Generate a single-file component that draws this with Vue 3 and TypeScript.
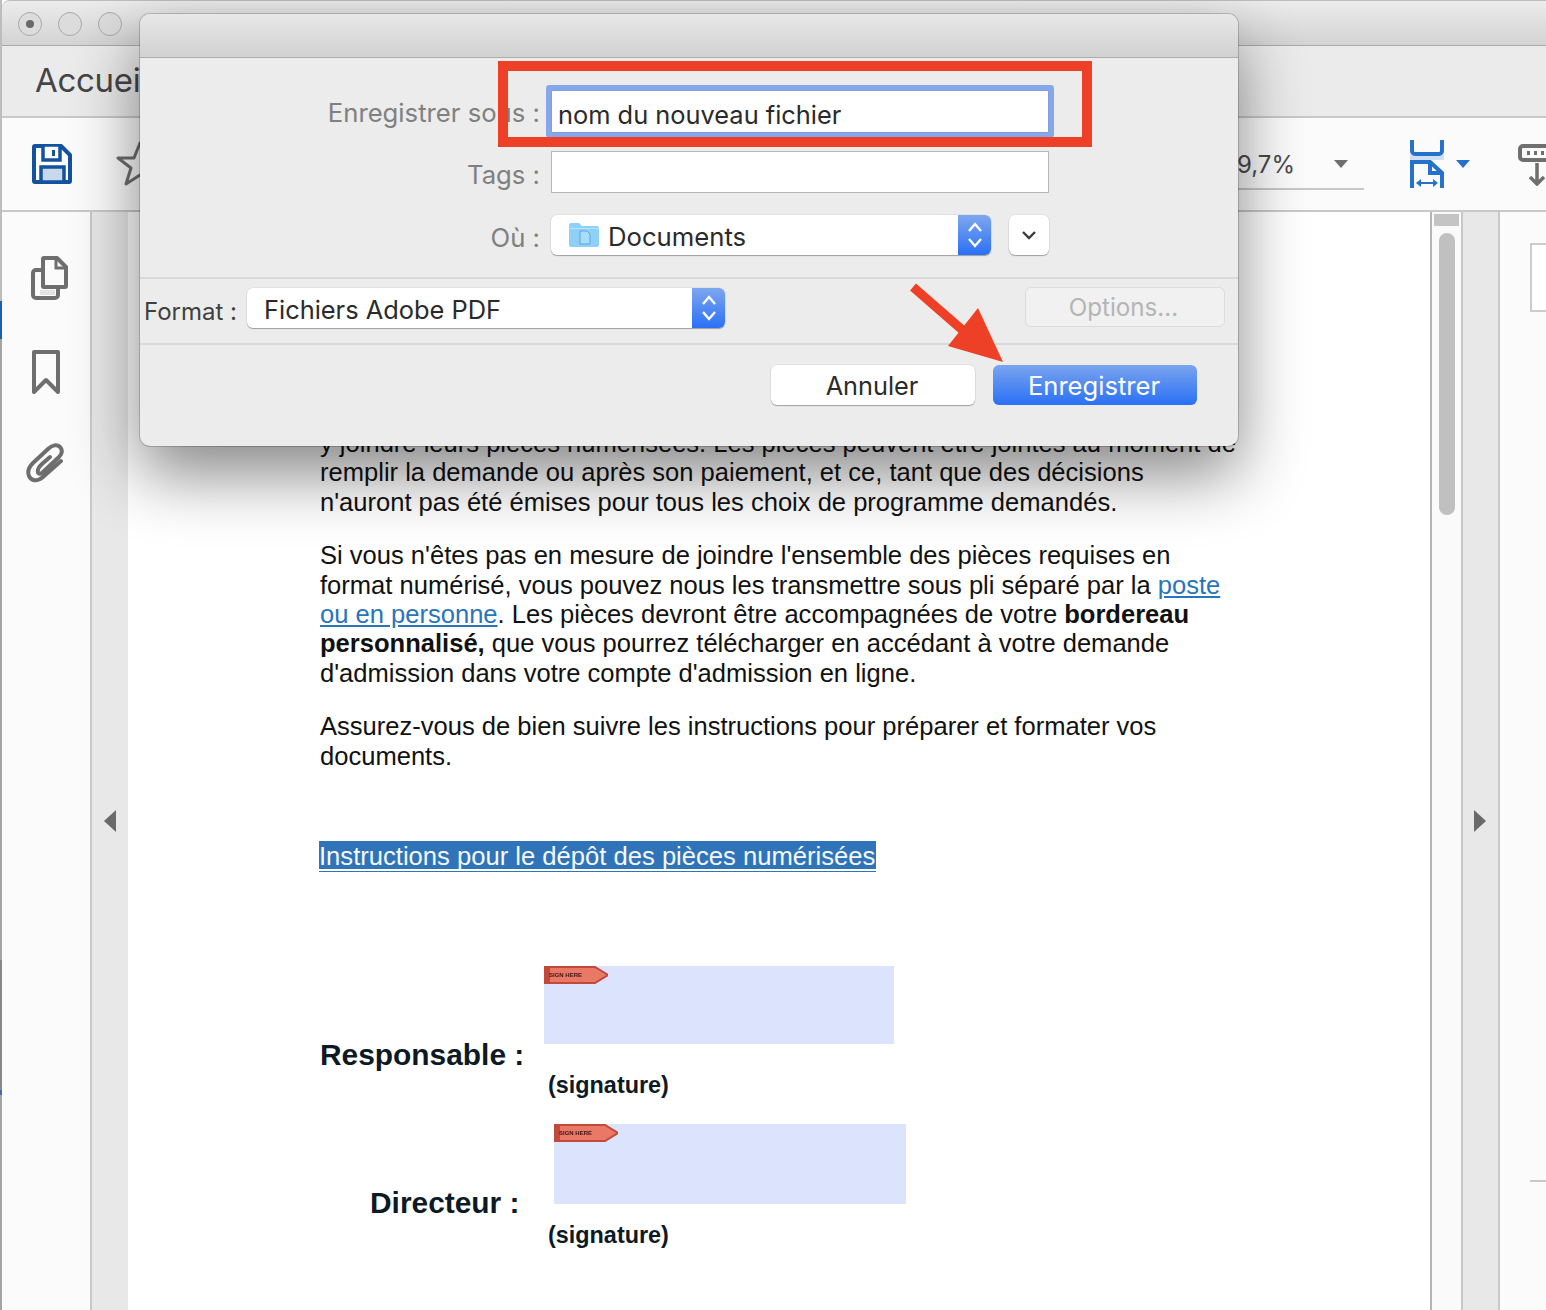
<script setup lang="ts">
const firstPara: string[] = [
  "y joindre leurs pièces numérisées. Les pièces peuvent être jointes au moment de",
  "remplir la demande ou après son paiement, et ce, tant que des décisions",
  "n'auront pas été émises pour tous les choix de programme demandés.",
];
</script>

<template>
  <div class="app">
    <div class="edge"></div>
    <header class="titlebar">
      <span class="light"><i></i></span>
      <span class="light"></span>
      <span class="light"></span>
    </header>
    <div class="tabbar"><span class="tab">Accueil</span></div>
    <div class="toolbar">
      <svg class="save" width="40" height="40" viewBox="0 0 40 40">
        <path d="M3 2H29L38 11V37a1 1 0 0 1-1 1H3a1 1 0 0 1-1-1V3a1 1 0 0 1 1-1Z" fill="#fff" stroke="#12529f" stroke-width="4" stroke-linejoin="round" />
        <rect x="11" y="1" width="17" height="15" fill="#fff" stroke="#12529f" stroke-width="3.5" />
        <rect x="20" y="6" width="3" height="6" fill="#12529f" />
        <rect x="9" y="23" width="23" height="15" fill="#c9d9ec" stroke="#12529f" stroke-width="3.5" />
      </svg>
      <svg class="star" width="48" height="48" viewBox="0 0 48 48">
        <path d="M24 3L30 18H46L33 28L38 44L24 35L10 44L15 28L2 18H18Z" fill="none" stroke="#6f6f6f" stroke-width="3" stroke-linejoin="round" />
      </svg>
      <div class="zoomfield"><span>9,7%</span><i class="caret grey"></i></div>
      <svg class="fit" width="34" height="48" viewBox="0 0 34 48">
        <rect x="0" y="15" width="34" height="5" fill="#cfe0f5" />
        <path d="M2 0V11a3 3 0 0 0 3 3H29a3 3 0 0 0 3-3V0" fill="none" stroke="#2472cc" stroke-width="4" />
        <path d="M2 48V22H20L32 33V48M20 22V33H32" fill="none" stroke="#2472cc" stroke-width="4" />
        <path d="M9 43H25" stroke="#2472cc" stroke-width="2" />
        <path d="M6 43L11 39V47ZM28 43L23 39V47Z" fill="#2472cc" />
      </svg>
      <i class="caret blue"></i>
      <svg class="printer" width="40" height="42" viewBox="0 0 40 42">
        <rect x="2" y="2" width="38" height="14" rx="3" fill="none" stroke="#6f6f6f" stroke-width="4" />
        <path d="M9 7h3v4h-3zM16 7h3v4h-3zM23 7h3v4h-3z" fill="#6f6f6f" />
        <path d="M19 19V40M12 33L19 40L26 33" fill="none" stroke="#6f6f6f" stroke-width="3.5" />
      </svg>
    </div>

    <div class="body">
      <aside class="rail">
        <svg class="ic-copy" width="38" height="44" viewBox="0 0 38 44">
          <rect x="3" y="14" width="25" height="28" rx="3" fill="none" stroke="#6e6e6e" stroke-width="4" />
          <rect x="10" y="34" width="15" height="5" fill="#e2e2e2" />
          <path d="M14 2H27L36 11V30a1 1 0 0 1-1 1H14a1 1 0 0 1-1-1V3a1 1 0 0 1 1-1Z" fill="#fbfbfb" stroke="#6e6e6e" stroke-width="4" stroke-linejoin="round" />
          <path d="M26 2V12H36" fill="none" stroke="#6e6e6e" stroke-width="3" />
        </svg>
        <svg class="ic-mark" width="28" height="44" viewBox="0 0 28 44">
          <path d="M2 2H26V42L14 30L2 42Z" fill="none" stroke="#6e6e6e" stroke-width="4" stroke-linejoin="round" />
        </svg>
        <svg class="ic-clip" width="38" height="41" viewBox="0 0 38 41">
          <path d="M35 19L17 35C11 40 5 39 3 34C1 29 3 25 7 21L22 7C26 3 31 2 34 5C37 8 36 12 33 15L17 30C14 33 11 32 12 28C12 26 14 24 16 22L24 15" fill="none" stroke="#6e6e6e" stroke-width="4" stroke-linecap="round" />
        </svg>
      </aside>
      <div class="gutter"><i class="tri left"></i></div>
      <main class="page">
        <p class="para">
          <template v-for="line in firstPara" :key="line">{{ line }}<br /></template>
        </p>
        <p class="para">
          Si vous n'êtes pas en mesure de joindre l'ensemble des pièces requises en<br />
          format numérisé, vous pouvez nous les transmettre sous pli séparé par la <a class="lnk">poste</a><br />
          <a class="lnk">ou en personne</a>. Les pièces devront être accompagnées de votre <b>bordereau</b><br />
          <b>personnalisé,</b> que vous pourrez télécharger en accédant à votre demande<br />
          d'admission dans votre compte d'admission en ligne.
        </p>
        <p class="para">
          Assurez-vous de bien suivre les instructions pour préparer et formater vos<br />
          documents.
        </p>
        <div class="selected"><span>Instructions pour le dépôt des pièces numérisées</span></div>

        <div class="sign first">
          <strong class="who">Responsable :</strong>
          <div class="field">
            <div class="box">
              <span class="flag"><svg width="64" height="18" viewBox="0 0 64 18"><path d="M1 1H51L64 9L51 17H1Z" fill="#ea7866" stroke="#c24a3c" stroke-width="2" /><path d="M1 1H6V17H1Z" fill="#c24a3c" /></svg><em>SIGN HERE</em></span>
            </div>
            <strong class="sigtext">(signature)</strong>
          </div>
        </div>
        <div class="sign second">
          <strong class="who">Directeur :</strong>
          <div class="field">
            <div class="box">
              <span class="flag"><svg width="64" height="18" viewBox="0 0 64 18"><path d="M1 1H51L64 9L51 17H1Z" fill="#ea7866" stroke="#c24a3c" stroke-width="2" /><path d="M1 1H6V17H1Z" fill="#c24a3c" /></svg><em>SIGN HERE</em></span>
            </div>
            <strong class="sigtext">(signature)</strong>
          </div>
        </div>
      </main>
      <div class="scroll">
        <div class="sbtn"></div>
        <div class="thumb"></div>
      </div>
      <div class="gutter r"><i class="tri right"></i></div>
      <aside class="rrail">
        <div class="thumbpage"></div>
        <div class="tick"></div>
      </aside>
    </div>

    <section class="dialog">
      <div class="dhead"></div>
      <div class="form">
        <div class="row r1">
          <label class="lab">Enregistrer sous :</label>
          <div class="input focus">nom du nouveau fichier</div>
        </div>
        <div class="row r2">
          <label class="lab">Tags :</label>
          <div class="input"></div>
        </div>
        <div class="row r3">
          <label class="lab">Où :</label>
          <div class="select where">
            <svg class="folder" width="30" height="24" viewBox="0 0 30 24">
              <path d="M0 2a2 2 0 0 1 2-2H10L13 3H28a2 2 0 0 1 2 2V22a2 2 0 0 1-2 2H2a2 2 0 0 1-2-2Z" fill="#8fd0f8" />
              <path d="M0 6H30V5H0Z" fill="#b7e2fb" />
              <path d="M11 8H18L21 11V21H11Z" fill="#a9dcfb" stroke="#5aa5da" stroke-width="1" />
            </svg>
            <span class="seltext">Documents</span>
            <span class="stepper">
              <svg width="16" height="28" viewBox="0 0 16 28"><path d="M2 10L8 3L14 10M2 18L8 25L14 18" fill="none" stroke="#fff" stroke-width="2.4" /></svg>
            </span>
          </div>
          <div class="more">
            <svg width="16" height="10" viewBox="0 0 16 10"><path d="M2 2L8 8L14 2" fill="none" stroke="#3a3a3a" stroke-width="2.4" /></svg>
          </div>
        </div>
      </div>
      <div class="sep"></div>
      <div class="fmt">
        <label class="fmtlab">Format :</label>
        <div class="select format">
          <span class="seltext">Fichiers Adobe PDF</span>
          <span class="stepper">
            <svg width="16" height="28" viewBox="0 0 16 28"><path d="M2 10L8 3L14 10M2 18L8 25L14 18" fill="none" stroke="#fff" stroke-width="2.4" /></svg>
          </span>
        </div>
        <button class="options" type="button">Options...</button>
      </div>
      <div class="sep"></div>
      <div class="actions">
        <button class="btn" type="button">Annuler</button>
        <button class="btn primary" type="button">Enregistrer</button>
      </div>
    </section>

    <div class="redbox"></div>
    <svg class="arrow" width="110" height="90" viewBox="0 0 110 90">
      <path d="M4 4L66 58" stroke="#ee4026" stroke-width="9" />
      <path d="M94 79L69 25L39 63Z" fill="#ee4026" />
    </svg>
  </div>
</template>

<style>
html, body { margin: 0; padding: 0; background: #fff; }
</style>

<style scoped>
.app {
  position: relative;
  width: 1546px;
  height: 1310px;
  overflow: hidden;
  display: flex;
  flex-direction: column;
  box-sizing: border-box;
  padding-left: 2px;
  background: #fff;
  font-family: Inter, "Liberation Sans", sans-serif;
}
.edge {
  position: absolute;
  left: 0; top: 0;
  width: 2px;
  height: 1310px;
  background: linear-gradient(to bottom, #bdbdbd 0 301px, #1f5fb0 301px 339px, #a5a5a5 339px 960px, #888 960px 1090px, #3d6fb0 1090px 1095px, #a5a5a5 1095px);
}
.titlebar {
  flex: none;
  display: flex;
  align-items: center;
  gap: 16px;
  padding: 2px 0 0 16px;
  height: 42px;
  background: linear-gradient(#ececec, #d3d3d3);
  border-top: 1px solid #bdbdbd;
  border-bottom: 1px solid #a9a9a9;
  border-top-left-radius: 8px;
}
.light {
  width: 24px; height: 24px;
  box-sizing: border-box;
  border-radius: 50%;
  border: 1px solid #a8a8a8;
  background: #dcdcdc;
  display: flex;
  align-items: center;
  justify-content: center;
}
.light i { width: 8px; height: 8px; border-radius: 50%; background: #6a6a6a; }
.tabbar {
  height: 70px;
  flex: none;
  display: flex;
  align-items: center;
  padding-left: 33px;
  background: #ebebeb;
  border-bottom: 2px solid #c8c8c8;
}
.tab { font-size: 33px; color: #454545; letter-spacing: -0.3px; margin-top: -2px; }
.toolbar {
  height: 92px;
  flex: none;
  display: flex;
  align-items: center;
  padding-left: 30px;
  background: #fbfbfb;
  border-bottom: 2px solid #c8c8c8;
}
.save { flex: none; }
.star { flex: none; margin-left: 44px; }
.zoomfield {
  margin-left: auto;
  width: 126px;
  height: 51px;
  flex: none;
  box-sizing: border-box;
  display: flex;
  align-items: center;
  justify-content: space-between;
  padding: 2px 16px 0 0;
  border-bottom: 2px solid #c8c8c8;
  font-size: 24px;
  color: #4a4a4a;
}
.zoomfield span { margin-left: -1px; margin-top: 1px; }
.caret {
  display: block;
  width: 0; height: 0;
  flex: none;
  border-left: 7px solid transparent;
  border-right: 7px solid transparent;
  border-top: 8px solid #6f6f6f;
}
.caret.blue { border-top-color: #2472cc; margin-left: 12px; }
.fit { margin-left: 46px; flex: none; }
.printer { margin: 2px -12px 0 48px; flex: none; }

.body { flex: 1; display: flex; min-height: 0; }
.rail {
  width: 88px;
  flex: none;
  background: #fbfbfb;
  border-right: 2px solid #c8c8c8;
  display: flex;
  flex-direction: column;
  align-items: flex-start;
  padding-top: 44px;
}
.ic-copy { margin-left: 28px; }
.ic-mark { margin-left: 30px; margin-top: 50px; }
.ic-clip { margin-left: 24px; margin-top: 48px; }
.gutter {
  width: 36px;
  flex: none;
  background: #e8e8e8;
  display: flex;
  justify-content: center;
  padding-top: 598px;
  box-sizing: border-box;
}
.gutter.r { width: 37px; border-right: 2px solid #c8c8c8; padding-right: 2px; }
.tri { display: block; width: 0; height: 0; border-top: 11px solid transparent; border-bottom: 11px solid transparent; }
.tri.left { border-right: 12px solid #6a6a6a; }
.tri.right { border-left: 12px solid #6a6a6a; }
.page {
  flex: 1;
  min-width: 0;
  background: #fff;
  padding: 217px 0 0 192px;
  box-sizing: border-box;
  font-family: "Liberation Sans", Arial, sans-serif;
  color: #111;
  font-size: 25.55px;
  line-height: 29.4px;
  white-space: nowrap;
}
.para { margin: 0 0 24px; }
.lnk { color: #2a74bb; text-decoration: underline; }
.selected {
  margin-top: 70px;
  margin-left: -1px;
  height: 28px;
  width: 557px;
  background: #2f74b8;
  color: #f6f9fd;
  box-shadow: 0 2px 0 #fff, 0 3px 0 #2f74b8;
  line-height: 30px;
  overflow: hidden;
  font-size: 25.6px;
}
.sign { display: flex; }
.who { display: block; flex: none; color: #0d1a26; font-size: 29.9px; line-height: 36px; }
.first { margin-top: 97px; }
.first .who { width: 224px; margin-top: 71px; }
.first .box { width: 350px; height: 78px; }
.second { margin-top: 25px; padding-left: 50px; }
.second .who { width: 184px; margin-top: 61px; }
.second .box { width: 352px; height: 80px; }
.second .sigtext { margin-left: -6px; margin-top: 17px; }
.box { position: relative; background: #dbe3fd; }
.flag { position: absolute; left: 0; top: 0; width: 64px; height: 18px; display: block; }
.flag svg { display: block; }
.flag em {
  position: absolute;
  left: 5px; top: 5px;
  font: normal 700 6px/8px "Liberation Sans", sans-serif;
  color: #3a1512;
  filter: blur(0.4px);
}
.sigtext { display: block; color: #0d1a26; font-size: 23.4px; line-height: 28px; margin: 27px 0 0 4px; }
.scroll {
  width: 33px;
  flex: none;
  box-sizing: border-box;
  background: #fafafa;
  border-left: 2px solid #b4b4b4;
  border-right: 2px solid #c8c8c8;
  padding: 2px 2px 0;
  display: flex;
  flex-direction: column;
  align-items: center;
}
.sbtn { width: 25px; height: 12px; background: #c4c4c4; }
.thumb { width: 16px; height: 282px; margin-top: 7px; border-radius: 8px; background: #c0c0c0; }
.rrail { width: 46px; flex: none; box-sizing: border-box; background: #fbfbfb; padding: 31px 0 0 30px; }
.thumbpage { height: 69px; box-sizing: border-box; width: 16px; background: #fff; border: 2px solid #ccc; border-right: 0; }
.tick { height: 2px; background: #c8c8c8; margin-top: 868px; }

.dialog {
  position: absolute;
  left: 140px; top: 14px;
  width: 1098px; height: 432px;
  display: flex;
  flex-direction: column;
  background: #ececec;
  border-radius: 10px;
  box-shadow: 0 0 0 1px rgba(0,0,0,.18), 0 28px 66px rgba(0,0,0,.48);
  overflow: hidden;
  color: #2a2a2a;
}
.dhead {
  height: 43px;
  flex: none;
  background: linear-gradient(#e8e8e8, #d1d1d1);
  border-bottom: 1px solid #adadad;
}
.form { padding-top: 32px; display: flex; flex-direction: column; height: 219px; box-sizing: border-box; flex: none; }
.row { display: flex; align-items: center; flex: none; }
.r1 { height: 43px; }
.r2 { height: 42px; margin-top: 18px; }
.r3 { height: 40px; margin-top: 22px; }
.lab { width: 400px; flex: none; text-align: right; color: #808080; font-size: 25.7px; margin: 4px 11px 0 0; }
.r1 .lab { margin-top: 2px; }
.input {
  width: 498px;
  height: 100%;
  box-sizing: border-box;
  background: #fff;
  border: 1px solid #b7b7b7;
  font-size: 25.4px;
  line-height: 48px;
  padding-left: 6px;
  color: #2a2a2a;
}
.input.focus { border-color: #7f9fde; box-shadow: 0 0 0 5px #86a7ea; border-radius: 1px; }
.select {
  position: relative;
  height: 40px;
  box-sizing: border-box;
  background: #fff;
  border-radius: 6px;
  display: flex;
  align-items: center;
  font-size: 25.4px;
  color: #2a2a2a;
  box-shadow: 0 0 0 0.5px rgba(0,0,0,.08), 0 1px 1px rgba(0,0,0,.3);
}
.seltext { margin-top: 2px; }
.where { width: 440px; padding-left: 18px; font-size: 25.7px; }
.folder { margin-right: 9px; flex: none; }
.format { width: 478px; padding-left: 17px; }
.stepper {
  position: absolute;
  right: 0; top: 0;
  width: 33px; height: 40px;
  border-radius: 0 6px 6px 0;
  background: linear-gradient(#7ea7ee, #2a70f6);
  display: flex;
  align-items: center;
  justify-content: center;
}
.more {
  margin-left: 18px;
  width: 40px; height: 40px;
  box-sizing: border-box;
  background: #fff;
  border-radius: 6px;
  display: flex;
  align-items: center;
  justify-content: center;
  box-shadow: 0 0 0 0.5px rgba(0,0,0,.08), 0 1px 1px rgba(0,0,0,.3);
}
.sep { height: 2px; background: #d9d9d9; flex: none; }
.fmt {
  height: 64px;
  flex: none;
  box-sizing: border-box;
  display: flex;
  align-items: flex-start;
  padding: 9px 13px 0 4px;
}
.fmtlab { width: 103px; flex: none; font-size: 24px; line-height: 47px; color: #3f3f3f; }
.options {
  margin-left: auto;
  margin-top: -1px;
  width: 200px; height: 40px;
  padding: 0 3px 0 0;
  border-radius: 6px;
  border: 1px solid #dcdcdc;
  background: #f1f1f1;
  color: #b4b4b4;
  font: 24.2px Inter, "Liberation Sans", sans-serif;
}
.actions { flex: 1; display: flex; justify-content: flex-end; align-items: flex-start; gap: 18px; padding: 20px 41px 0 0; }
.btn {
  width: 204px; height: 40px;
  border: 0;
  padding: 0 2px 0 0;
  border-radius: 6px;
  background: #fff;
  color: #2a2a2a;
  font: 25.3px Inter, "Liberation Sans", sans-serif;
  box-shadow: 0 0 0 0.5px rgba(0,0,0,.08), 0 1px 1px rgba(0,0,0,.3);
}
.btn.primary { background: linear-gradient(#7aa4ee, #2a70f6); color: #fff; box-shadow: none; font-size: 25.6px; }
.redbox {
  position: absolute;
  left: 498px; top: 61px;
  width: 594px; height: 86px;
  box-sizing: border-box;
  border: 10px solid #ee4026;
}
.arrow { position: absolute; left: 909px; top: 283px; }
</style>
